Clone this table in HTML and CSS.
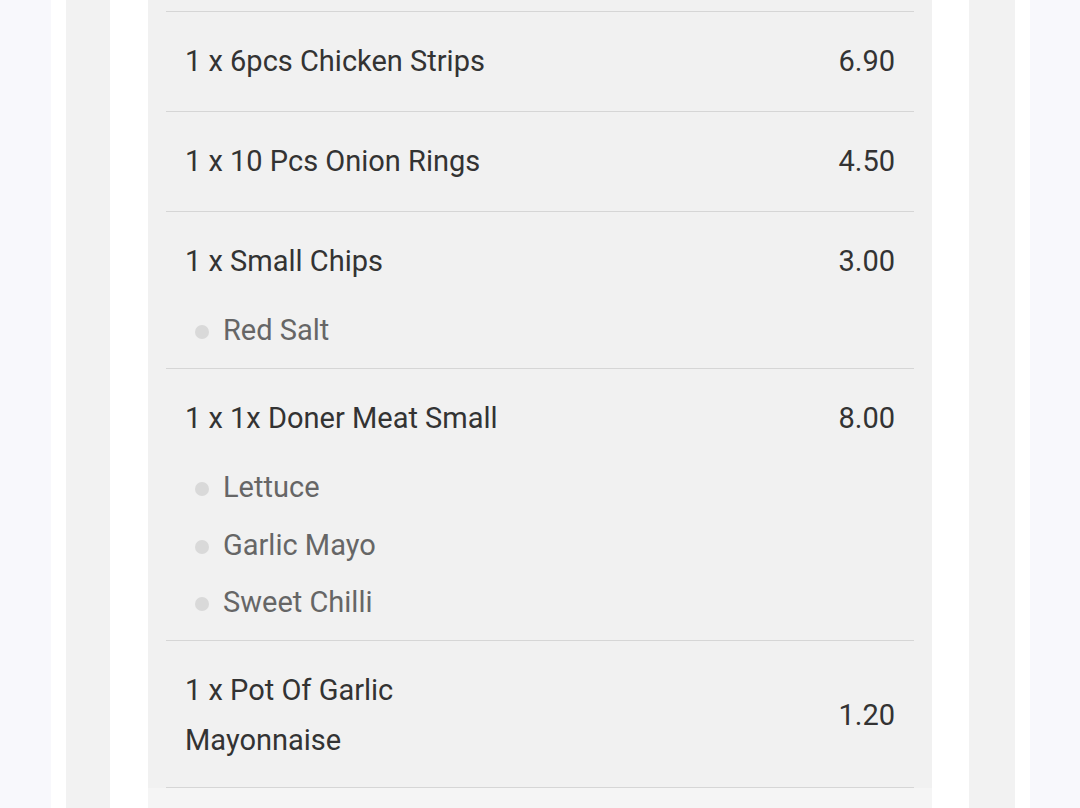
FILE: index.html
```html
<!DOCTYPE html>
<html>
<head>
<meta charset="utf-8">
<link rel="stylesheet" href="styles.css">
</head>
<body>
<div class="page">
  <div class="strip light w51"></div>
  <div class="strip white w15"></div>
  <div class="strip gray w44"></div>
  <div class="strip white w38"></div>
  <div class="panel">
    <div class="top-gap"></div>
    <div class="row">
      <div class="main"><div class="title">1 x 6pcs Chicken Strips</div></div>
      <div class="price">6.90</div>
    </div>
    <div class="row">
      <div class="main"><div class="title">1 x 10 Pcs Onion Rings</div></div>
      <div class="price">4.50</div>
    </div>
    <div class="row top">
      <div class="main">
        <div class="title">1 x Small Chips</div>
        <ul class="subs">
          <li>Red Salt</li>
        </ul>
      </div>
      <div class="price">3.00</div>
    </div>
    <div class="row top">
      <div class="main">
        <div class="title">1 x 1x Doner Meat Small</div>
        <ul class="subs">
          <li>Lettuce</li>
          <li>Garlic Mayo</li>
          <li>Sweet Chilli</li>
        </ul>
      </div>
      <div class="price">8.00</div>
    </div>
    <div class="row last">
      <div class="main narrow"><div class="title">1 x Pot Of Garlic Mayonnaise</div></div>
      <div class="price">1.20</div>
    </div>
    <div class="footer"></div>
  </div>
  <div class="strip white w37"></div>
  <div class="strip gray w46"></div>
  <div class="strip white w15"></div>
  <div class="strip light w50"></div>
</div>
</body>
</html>
```
FILE: styles.css
```css
html, body {
  margin: 0;
  padding: 0;
  height: 808px;
  overflow: hidden;
  background: #ffffff;
  font-family: Roboto, "Noto Sans", sans-serif;
}
.page {
  display: flex;
  height: 808px;
}
.strip { flex: none; height: 100%; }
.light { background: #f8f8fc; }
.white { background: #ffffff; }
.gray { background: #f2f2f2; }
.w51 { width: 51px; }
.w15 { width: 15px; }
.w44 { width: 44px; }
.w38 { width: 38px; }
.w37 { width: 37px; }
.w46 { width: 46px; }
.w50 { width: 50px; }
.panel {
  flex: none;
  width: 784px;
  background: #f1f1f1;
  display: flex;
  flex-direction: column;
}
.top-gap { height: 11px; flex: none; }
.row {
  margin: 0 18px;
  border-top: 1px solid #d6d6d6;
  padding: 24px 19px 25px 19px;
  display: flex;
  align-items: center;
  justify-content: space-between;
  flex: none;
}
.row.top { align-items: flex-start; }
.row.last {
  border-bottom: 1px solid #d6d6d6;
  padding-bottom: 22px;
}
.main { flex: 1; min-width: 0; }
.main.narrow { max-width: 250px; }
.title {
  font-size: 29px;
  line-height: 50px;
  color: #333333;
}
.price {
  font-size: 29px;
  line-height: 50px;
  color: #333333;
  flex: none;
}
.subs {
  list-style: none;
  margin: 19px 0 -12px 0;
  padding: 0;
  display: flex;
  flex-direction: column;
  gap: 7.5px;
}
.subs li {
  display: flex;
  align-items: center;
  font-size: 29px;
  line-height: 50px;
  color: #666666;
  padding-left: 10px;
}
.subs li::before {
  content: "";
  width: 14px;
  height: 14px;
  border-radius: 50%;
  background: #d9d9d9;
  margin-right: 14px;
  margin-top: 4px;
  flex: none;
}
.footer {
  flex: 1;
  background: #f5f5f5;
}
```
